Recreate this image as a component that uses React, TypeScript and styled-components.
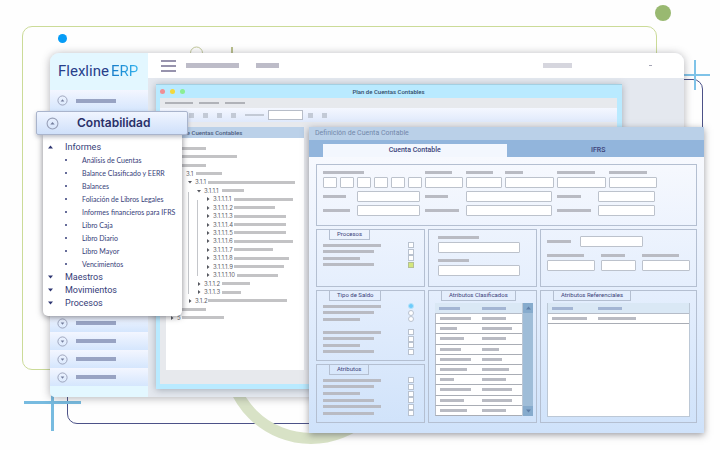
import React from "react";
import styled, { createGlobalStyle, css } from "styled-components";

const GlobalStyle = createGlobalStyle`
  *, *::before, *::after { box-sizing: border-box; }
  body {
    margin: 0;
    background: #fefefe;
    font-family: Roboto, "Liberation Sans", sans-serif;
    color: #3b4279;
  }
  button, input { font: inherit; color: inherit; padding: 0; margin: 0; border: 0; }
  h1, h2, h3, p, ul { margin: 0; padding: 0; font-weight: 400; }
  ul { list-style: none; }
`;

/* ---------- stage and backdrop ---------- */

const Stage = styled.main`
  position: relative;
  display: flow-root;
  min-height: 450px;
  overflow: hidden;
`;

const Outline = styled.div<{ $tone: "lime" | "navy" }>`
  position: absolute;
  border-radius: 10px;
  ${(p) =>
    p.$tone === "lime"
      ? css`inset: 26px 63px 80px 22px; border: 1px solid #cbdb98;`
      : css`inset: 79px 17px 26px 67px; border: 1px solid #4c5288;`}
`;

const Dot = styled.span<{ $tone: "green" | "blue" }>`
  position: absolute;
  border-radius: 50%;
  ${(p) =>
    p.$tone === "green"
      ? css`top: 5px; right: 49px; width: 16px; height: 16px; background: #99b971;`
      : css`top: 34px; left: 58px; width: 9px; height: 9px; background: #069cf6;`}
`;

const Doodle = styled.svg<{ $side?: "right" }>`
  position: absolute;
  top: 0;
  ${(p) => (p.$side === "right" ? "right: 0;" : "left: 0;")}
  fill: none;
`;

/* ---------- shared skeleton pieces ---------- */

const Bar = styled.span<{ $w: number; $h?: number; $c?: string }>`
  display: block;
  flex: none;
  width: ${(p) => p.$w}px;
  height: ${(p) => p.$h ?? 3}px;
  background: ${(p) => p.$c ?? "#b9bbc3"};
`;

/* ---------- main window ---------- */

const MainWindow = styled.section`
  position: relative;
  display: grid;
  grid-template-columns: 98px 1fr;
  margin: 53px 36px 53px 50px;
  border-radius: 9px 9px 5px 5px;
  overflow: hidden;
  background: #e4e8ef;
`;

const MainShadow = styled.div`
  position: absolute;
  inset: 53px 36px 53px 50px;
  border-radius: 9px 9px 5px 5px;
  box-shadow: 0 1px 8px rgba(60, 60, 70, 0.4);
`;

const Sidebar = styled.nav`
  display: flex;
  flex-direction: column;
  background: #e3f7ff;
  padding-bottom: 11px;
`;

const Logo = styled.h1`
  display: flex;
  align-items: center;
  gap: 2px;
  height: 37px;
  padding: 0 0 2px 8px;
  font-size: 15px;
  line-height: 18px;
  color: #27408b;
`;

const LogoAccent = styled.span`
  color: transparent;
  background: linear-gradient(90deg, #1378c6, #35b4ee);
  background-clip: text;
`;

const SideButton = styled.button<{ $tall?: boolean }>`
  display: flex;
  align-items: center;
  gap: 8px;
  height: ${(p) => (p.$tall ? 21 : 18)}px;
  padding-left: 7px;
  background: linear-gradient(#f3f6ff, #d5e6fd);
`;

const SideGap = styled.div`
  flex: 1;
`;

const TopBar = styled.header`
  display: flex;
  align-items: center;
  height: 25px;
  padding: 0 32px 0 13px;
  background: #fff;
`;

const MenuButton = styled.button`
  display: grid;
  gap: 3px;
  width: 15px;
  margin-right: 10px;
  background: none;
`;

const MenuLine = styled.span`
  height: 2px;
  background: #9793ad;
`;

const TopLinks = styled.div`
  display: flex;
  flex: 1;
  gap: 17px;
`;

const TopUser = styled.div`
  display: flex;
  align-items: center;
  gap: 77px;
`;

const Content = styled.div`
  display: flex;
  flex-direction: column;
`;

const Workspace = styled.div`
  flex: 1;
  padding: 6px 62px 8px 8px;
`;

/* ---------- chart of accounts window ---------- */

const PlanWindow = styled.section`
  padding: 0 5px 5px 4px;
  background: #b9eaff;
  border-top: 1px solid #a3cfe2;
  box-shadow: 0 1px 7px rgba(70, 80, 95, 0.4);
`;

const PlanHead = styled.header`
  display: grid;
  grid-template-columns: 30px 1fr 30px;
  align-items: center;
  height: 13px;
`;

const PlanTitle = styled.h2`
  font-size: 6px;
  line-height: 8px;
  font-weight: 500;
  text-align: center;
  color: #304a68;
`;

const Lights = styled.span`
  display: flex;
  gap: 5px;
`;

const Light = styled.i<{ $c: string }>`
  width: 5px;
  height: 5px;
  border-radius: 50%;
  background: ${(p) => p.$c};
`;

const PlanBody = styled.div`
  padding-bottom: 14px;
  background: #e7e9ed;
`;

const PlanMenu = styled.div`
  display: flex;
  align-items: center;
  gap: 6px;
  height: 10px;
  padding-left: 5px;
`;

const Toolbar = styled.div`
  display: flex;
  align-items: center;
  gap: 9px;
  height: 14px;
  margin-bottom: 5px;
  padding-left: 15px;
  background: linear-gradient(#f4f7ff, #dfe9fb);
`;

const Tool = styled.button`
  width: 5px;
  height: 5px;
  background: #c3cad6;
`;

const ToolField = styled.input`
  width: 35px;
  height: 10px;
  border: 1px solid #b7bdc8;
  background: #fff;
  margin: 0 -4px 0 -5px;
`;

const TreePanel = styled.div`
  width: 138px;
  height: 243px;
  margin-left: 6px;
  background: #fff;
`;

const TreeTitle = styled.h2`
  height: 11px;
  padding-left: 4px;
  background: #bbd1e9;
  font-size: 6px;
  line-height: 11px;
  font-weight: 500;
  color: #4a5a7c;
`;

const Tree = styled.ul`
  position: relative;
  display: grid;
  grid-auto-rows: 1fr;
  height: 178px;
  margin-top: 6px;
`;

const TreeRow = styled.li<{ $level: number }>`
  display: flex;
  align-items: center;
  padding-left: ${(p) => 4 + p.$level * 9}px;
  font-family: Inter, Roboto, sans-serif;
  font-size: 6px;
  line-height: 8px;
  color: #606269;
`;

const TreeMark = styled.svg`
  flex: none;
  width: 4px;
  height: 4px;
  margin-right: 3px;
`;

const TreeLabel = styled.span<{ $w: number }>`
  flex: none;
  width: ${(p) => p.$w}px;
  white-space: nowrap;
`;

const TreeGuides = styled.svg`
  position: absolute;
  top: 0;
  left: 0;
  width: 60px;
  height: 178px;
`;

type Node = { level: number; mark?: "open" | "closed"; label?: string; lw: number; w: number };

const nodes: Node[] = [
  { level: 0, lw: 4, w: 25 },
  { level: 0, lw: 4, w: 56 },
  { level: 0, lw: 4, w: 25 },
  { level: 1, label: "3.1", lw: 10, w: 26 },
  { level: 2, mark: "open", label: "3.1.1", lw: 13, w: 87 },
  { level: 3, mark: "open", label: "3.1.1.1", lw: 18, w: 22 },
  { level: 4, mark: "closed", label: "3.1.1.1.1", lw: 21, w: 59 },
  { level: 4, mark: "closed", label: "3.1.1.1.2", lw: 21, w: 41 },
  { level: 4, mark: "closed", label: "3.1.1.1.3", lw: 21, w: 52 },
  { level: 4, mark: "closed", label: "3.1.1.1.4", lw: 21, w: 52 },
  { level: 4, mark: "closed", label: "3.1.1.1.5", lw: 21, w: 52 },
  { level: 4, mark: "closed", label: "3.1.1.1.6", lw: 21, w: 59 },
  { level: 4, mark: "closed", label: "3.1.1.1.7", lw: 21, w: 39 },
  { level: 4, mark: "closed", label: "3.1.1.1.8", lw: 21, w: 55 },
  { level: 4, mark: "closed", label: "3.1.1.1.9", lw: 21, w: 50 },
  { level: 4, mark: "closed", label: "3.1.1.1.10", lw: 24, w: 41 },
  { level: 3, mark: "closed", label: "3.1.1.2", lw: 18, w: 28 },
  { level: 3, mark: "closed", label: "3.1.1.3", lw: 18, w: 19 },
  { level: 2, mark: "closed", label: "3.1.2", lw: 13, w: 79 },
  { level: 0, lw: 4, w: 25 },
  { level: 0, mark: "closed", label: "5", lw: 5, w: 42 },
];

/* ---------- accounting menu card ---------- */

const MenuCard = styled.nav`
  position: absolute;
  top: 111px;
  left: 36px;
  width: 152px;
`;

const CardHead = styled.button`
  position: relative;
  display: flex;
  align-items: center;
  gap: 18px;
  width: 100%;
  height: 24px;
  padding-left: 9px;
  border: 1px solid #a9b4cc;
  border-radius: 2px;
  background: linear-gradient(#f0f5ff, #cfe0fa);
  box-shadow: 0 2px 4px rgba(60, 65, 90, 0.35);
  font-family: Inter, Roboto, sans-serif;
  font-size: 12px;
  line-height: 16px;
  font-weight: 600;
  color: #2a3068;
`;

const CardBody = styled.ul`
  margin: 0 6px 0 7px;
  padding: 5px 0 7px;
  border-radius: 0 0 5px 5px;
  background: #fff;
  box-shadow: 0 1px 6px rgba(50, 50, 60, 0.6);
`;

const CardLink = styled.a<{ $sub?: boolean }>`
  display: flex;
  align-items: center;
  height: 13px;
  white-space: nowrap;
  text-decoration: none;
  color: #353c78;
  ${(p) =>
    p.$sub
      ? css`gap: 15px; padding-left: 22px; font-family: Lato, Roboto, sans-serif; font-size: 7px; line-height: 10px;`
      : css`gap: 12px; padding-left: 5px; font-size: 9px; line-height: 12px;`}
`;

const Bullet = styled.i`
  width: 2px;
  height: 2px;
  border-radius: 50%;
  background: #353c78;
`;

/* ---------- account definition window ---------- */

const FormWindow = styled.section`
  position: absolute;
  top: 127px;
  left: 309px;
  right: 16px;
  background: linear-gradient(#f7f9fe 30px, #e4eefd 55%, #cfe2fa);
  box-shadow: 0 2px 7px rgba(60, 60, 70, 0.5);
`;

const FormTitle = styled.h2`
  height: 13px;
  padding-left: 6px;
  background: #bad0e8;
  font-size: 7px;
  line-height: 13px;
  color: #7388aa;
`;

const Tabs = styled.div`
  display: flex;
  align-items: flex-end;
  height: 17px;
  padding: 0 14px;
  background: #92b5dc;
`;

const Tab = styled.button<{ $active?: boolean }>`
  flex: 1;
  height: 13px;
  font-size: 7px;
  line-height: 13px;
  font-weight: 500;
  background: ${(p) => (p.$active ? "#f3f7fe" : "transparent")};
`;

const FormBody = styled.div`
  display: grid;
  grid-template-columns: 109fr 109fr 157fr;
  grid-template-rows: 62px 58px 133px;
  gap: 3px;
  padding: 7px 7px 10px;
`;

const Panel = styled.section<{ $wide?: boolean; $pad?: string; $grow?: number }>`
  display: flex;
  flex-direction: column;
  min-width: 0;
  ${(p) => p.$wide && "grid-column: 1 / -1;"}
  ${(p) => p.$grow && `flex: ${p.$grow};`}
  padding: ${(p) => p.$pad ?? "0 6px 5px"};
  border: 1px solid #b4bfd1;
`;

const Stack = styled.div`
  display: flex;
  flex-direction: column;
  gap: 3px;
`;

const Legend = styled.h3`
  align-self: flex-start;
  height: 10px;
  margin: 0 0 2px 6px;
  padding: 0 7px;
  border: 1px solid #b4bfd1;
  border-top: 0;
  font-size: 6px;
  line-height: 8px;
  font-weight: 400;
  white-space: nowrap;
  color: #3b4279;
`;

const Field = styled.input`
  display: block;
  min-width: 0;
  width: 100%;
  height: 11px;
  border: 1px solid #bcc2cc;
  border-radius: 1px;
  background: #fff;
`;

const TopGrid = styled.div`
  display: grid;
  grid-template-columns: 99fr 38fr 37fr 49fr 49fr 48fr;
  gap: 3px;
`;

const GroupGrid = styled.div`
  display: grid;
  grid-template-columns: 99fr 130fr 100fr;
  gap: 3px;
  margin-top: 3px;
`;

const Stacked = styled.label`
  display: grid;
  gap: 3px;
  min-width: 0;
`;

const Boxes = styled.div`
  display: grid;
  grid-template-columns: repeat(6, 1fr);
  gap: 3px;
`;

const Inline = styled.label<{ $label: number }>`
  display: grid;
  grid-template-columns: ${(p) => p.$label}px 1fr;
  align-items: center;
  padding-right: 2px;
`;

const Options = styled.div`
  flex: 1;
  display: grid;
  grid-auto-rows: 1fr;
`;

const Option = styled.label`
  display: flex;
  align-items: center;
  justify-content: space-between;
  height: 6px;
  padding-right: 4px;
`;

const Choice = styled.input`
  appearance: none;
  flex: none;
  width: 6px;
  height: 6px;
  border: 1px solid #b9c2cf;
  background: #fff;
  &[type="radio"] { border-radius: 50%; }
  &[type="radio"]:checked { background: #6ccbfb; border-color: #b4e2fa; }
  &[type="checkbox"]:checked { background: #d3e67c; border-color: #b3bf94; }
`;

const CodeRow = styled.label`
  display: grid;
  grid-template-columns: 33px 63px;
  align-items: center;
  margin-bottom: 7px;
`;

const TripleGrid = styled.div`
  display: grid;
  grid-template-columns: 48fr 35fr 48fr;
  gap: 6px;
`;

const TableFrame = styled.div`
  display: flex;
  align-items: flex-start;
  margin-right: -3px;
`;

const Table = styled.table<{ $first: number; $tall?: boolean }>`
  flex: 1;
  width: 100%;
  table-layout: fixed;
  ${(p) => p.$tall && "height: 113px; border-right: 1px solid #bcc8d6;"}
  border-spacing: 0;
  font-size: 0;
  th, td { padding: 0 0 0 4px; }
  th:first-child { width: ${(p) => p.$first}px; }
  th { height: 11px; background: #dae8f5; border-bottom: 1px solid #b5bcc8; }
  td { height: 10px; background: #fff; border-bottom: 1px solid #a9adb5; }
  ${(p) => p.$tall && "td:first-child { border-left: 1px solid #b5bcc8; }"}
`;

const Scroller = styled.div`
  display: flex;
  flex-direction: column;
  justify-content: space-between;
  width: 10px;
  align-self: stretch;
  background: #9fbdd8;
`;

const ScrollButton = styled.button`
  display: grid;
  place-items: center;
  height: 10px;
  background: #86abcd;
`;

const RefFrame = styled.div`
  flex: 1;
  background: #fff;
  border: 1px solid #bcc8d6;
  border-top: 0;
`;

/* ---------- small drawings ---------- */

function Knob({ size, up }: { size: number; up?: boolean }) {
  return (
    <svg width={size} height={size} viewBox="0 0 12 12" fill="none">
      <circle cx="6" cy="6" r="5" stroke="#98a0b8" strokeWidth="1" />
      <path d={up ? "M4 7h4L6 4.6z" : "M4 5h4L6 7.4z"} fill="#737d9c" />
    </svg>
  );
}

function Caret({ up, tone = "#2f3672" }: { up?: boolean; tone?: string }) {
  return (
    <svg width="5" height="4" viewBox="0 0 5 4">
      <path d={up ? "M0 3.5h5L2.5 .5z" : "M0 .5h5L2.5 3.5z"} fill={tone} />
    </svg>
  );
}

const subItems = [
  "Análisis de Cuentas",
  "Balance Clasificado y EERR",
  "Balances",
  "Foliación de Libros Legales",
  "Informes financieros para IFRS",
  "Libro Caja",
  "Libro Diario",
  "Libro Mayor",
  "Vencimientos",
];

const classified = [
  [31, 24], [17, 30], [24, 24], [21, 17], [31, 20],
  [27, 27], [14, 24], [31, 30], [24, 30], [27, 24],
];

type Opt = { w: number; kind?: "radio" | "none"; on?: boolean };

function OptionList({ name, items }: { name: string; items: Opt[] }) {
  return (
    <Options>
      {items.map((o, i) =>
        o.kind === "none" ? (
          <span key={i} />
        ) : (
          <Option key={i}>
            <Bar $w={o.w} />
            <Choice
              type={o.kind ?? "checkbox"}
              name={name}
              defaultChecked={o.on}
              aria-label={`${name} ${i + 1}`}
            />
          </Option>
        )
      )}
    </Options>
  );
}

function StackedField({ w, name }: { w: number; name: string }) {
  return (
    <Stacked>
      <Bar $w={w} />
      <Field aria-label={name} />
    </Stacked>
  );
}

function InlineField({ w, label, name }: { w: number; label: number; name: string }) {
  return (
    <Inline $label={label}>
      <Bar $w={w} />
      <Field aria-label={name} />
    </Inline>
  );
}

export default function App() {
  return (
    <>
      <GlobalStyle />
      <Stage>
        <Outline $tone="lime" />
        <Outline $tone="navy" />
        <Dot $tone="green" />
        <Dot $tone="blue" />
        <Doodle width="420" height="450" aria-hidden>
          <circle cx="311" cy="356" r="82.5" stroke="#d8e2c6" strokeWidth="11" />
          <circle cx="196.5" cy="53" r="6" stroke="#c3c99c" />
          <path d="M232 47v8" stroke="#b9bf8c" strokeWidth="2" />
          <path d="M24 402.5h57M52.5 392v39" stroke="#77bbe0" strokeWidth="3" />
        </Doodle>
        <Doodle $side="right" width="40" height="100" aria-hidden>
          <path d="M0 75h30M15 60v30" stroke="#7fc3e8" strokeWidth="2" />
        </Doodle>

        <MainShadow />
        <MainWindow>
          <Sidebar>
            <Logo>
              Flexline <LogoAccent>ERP</LogoAccent>
            </Logo>
            <SideButton $tall aria-label="Módulo 1">
              <Knob size={11} up />
              <Bar $w={40} $h={4} $c="#98a3c3" />
            </SideButton>
            <SideGap />
            {[2, 3, 4, 5].map((n) => (
              <SideButton key={n} aria-label={`Módulo ${n}`}>
                <Knob size={11} />
                <Bar $w={40} $h={4} $c="#98a3c3" />
              </SideButton>
            ))}
          </Sidebar>
          <Content>
            <TopBar>
              <MenuButton aria-label="Menú">
                <MenuLine />
                <MenuLine />
                <MenuLine />
              </MenuButton>
              <TopLinks>
                <Bar $w={53} $h={5} $c="#bdbcc8" />
                <Bar $w={23} $h={5} $c="#bdbcc8" />
              </TopLinks>
              <TopUser>
                <Bar $w={29} $h={5} $c="#d6d6de" />
                <Bar $w={3} $h={1} $c="#a5a5b5" />
              </TopUser>
            </TopBar>
            <Workspace>
              <PlanWindow>
                <PlanHead>
                  <Lights>
                    <Light $c="#f08f95" />
                    <Light $c="#f4d83c" />
                    <Light $c="#8bee93" />
                  </Lights>
                  <PlanTitle>Plan de Cuentas Contables</PlanTitle>
                </PlanHead>
                <PlanBody>
                  <PlanMenu>
                    <Bar $w={28} $h={2} $c="#b0b2b8" />
                    <Bar $w={20} $h={2} $c="#b0b2b8" />
                    <Bar $w={20} $h={2} $c="#b0b2b8" />
                  </PlanMenu>
                  <Toolbar>
                    {["Nuevo", "Abrir", "Guardar", "Copiar", "Imprimir"].map((t) => (
                      <Tool key={t} aria-label={t} />
                    ))}
                    <Bar $w={19} $h={2} $c="#c3cad6" />
                    <ToolField aria-label="Buscar" />
                    <Tool aria-label="Anterior" />
                    <Tool aria-label="Siguiente" />
                  </Toolbar>
                  <TreePanel>
                    <TreeTitle>Plan de Cuentas Contables</TreeTitle>
                    <Tree>
                      <TreeGuides aria-hidden>
                        <path d="M22.5 48v102M31.5 56v76" stroke="#c4c6ca" fill="none" />
                      </TreeGuides>
                      {nodes.map((n, i) => (
                        <TreeRow key={i} $level={n.level}>
                          <TreeMark viewBox="0 0 4 4">
                            {n.mark && (
                              <path
                                d={n.mark === "open" ? "M0 1h4L2 3.5z" : "M1 0v4l2.5-2z"}
                                fill="#55575e"
                              />
                            )}
                          </TreeMark>
                          <TreeLabel $w={n.lw}>{n.label}</TreeLabel>
                          <Bar $w={n.w} $c="#c3c3c5" />
                        </TreeRow>
                      ))}
                    </Tree>
                  </TreePanel>
                </PlanBody>
              </PlanWindow>
            </Workspace>
          </Content>
        </MainWindow>

        <MenuCard>
          <CardHead>
            <Knob size={13} up />
            Contabilidad
          </CardHead>
          <CardBody>
            <li>
              <CardLink href="#informes">
                <Caret up />
                Informes
              </CardLink>
            </li>
            {subItems.map((s) => (
              <li key={s}>
                <CardLink $sub href="#informes">
                  <Bullet />
                  {s}
                </CardLink>
              </li>
            ))}
            {["Maestros", "Movimientos", "Procesos"].map((s) => (
              <li key={s}>
                <CardLink href={`#${s.toLowerCase()}`}>
                  <Caret />
                  {s}
                </CardLink>
              </li>
            ))}
          </CardBody>
        </MenuCard>

        <FormWindow>
          <FormTitle>Definición de Cuenta Contable</FormTitle>
          <Tabs role="tablist">
            <Tab $active role="tab" aria-selected>
              Cuenta Contable
            </Tab>
            <Tab role="tab" aria-selected={false}>
              IFRS
            </Tab>
          </Tabs>
          <FormBody>
            <Panel $wide $pad="6px 39px 0 6px">
              <TopGrid>
                <Stacked as="div">
                  <Bar $w={41} />
                  <Boxes>
                    {[1, 2, 3, 4, 5, 6].map((n) => (
                      <Field key={n} aria-label={`Dígito ${n}`} />
                    ))}
                  </Boxes>
                </Stacked>
                <StackedField w={27} name="Nivel" />
                <StackedField w={27} name="Grupo" />
                <StackedField w={18} name="Tipo" />
                <StackedField w={38} name="Descripción" />
                <StackedField w={38} name="Referencia" />
              </TopGrid>
              <GroupGrid>
                <InlineField w={23} label={34} name="Nombre" />
                <InlineField w={23} label={41} name="Moneda" />
                <InlineField w={24} label={41} name="Clase" />
                <InlineField w={27} label={34} name="Vigencia" />
                <InlineField w={34} label={41} name="Unidad" />
                <InlineField w={34} label={41} name="Estado" />
              </GroupGrid>
            </Panel>

            <Panel $pad="0 6px 18px">
              <Legend>Procesos</Legend>
              <OptionList
                name="Procesos"
                items={[{ w: 58 }, { w: 51 }, { w: 37 }, { w: 51, on: true }]}
              />
            </Panel>
            <Panel $pad="6px 16px 0 9px">
              <Stack>
                <StackedField w={41} name="Código" />
                <span />
                <StackedField w={31} name="Código alterno" />
              </Stack>
            </Panel>
            <Panel $pad="6px 6px 0">
              <CodeRow>
                <Bar $w={24} />
                <Field aria-label="Centro" />
              </CodeRow>
              <TripleGrid>
                <StackedField w={37} name="Desde" />
                <StackedField w={24} name="Hasta" />
                <StackedField w={37} name="Total" />
              </TripleGrid>
            </Panel>

            <Stack>
              <Panel $grow={72}>
                <Legend>Tipo de Saldo</Legend>
                <OptionList
                  name="Tipo de Saldo"
                  items={[
                    { w: 58, kind: "radio", on: true },
                    { w: 51, kind: "radio" },
                    { w: 37, kind: "radio" },
                    { w: 0, kind: "none" },
                    { w: 58 },
                    { w: 51 },
                    { w: 37 },
                    { w: 51 },
                  ]}
                />
              </Panel>
              <Panel $grow={58}>
                <Legend>Atributos</Legend>
                <OptionList
                  name="Atributos"
                  items={[{ w: 58 }, { w: 51 }, { w: 37 }, { w: 51 }, { w: 58 }, { w: 51 }]}
                />
              </Panel>
            </Stack>
            <Panel>
              <Legend>Atributos Clasificados</Legend>
              <TableFrame>
                <Table $first={43} $tall>
                  <thead>
                    <tr>
                      <th><Bar $w={21} $c="#a3b5d3" /></th>
                      <th><Bar $w={24} $c="#a3b5d3" /></th>
                    </tr>
                  </thead>
                  <tbody>
                    {classified.map(([a, b], i) => (
                      <tr key={i}>
                        <td><Bar $w={a} /></td>
                        <td><Bar $w={b} /></td>
                      </tr>
                    ))}
                  </tbody>
                </Table>
                <Scroller>
                  <ScrollButton aria-label="Subir"><Caret up tone="#5f7fa8" /></ScrollButton>
                  <ScrollButton aria-label="Bajar"><Caret tone="#5f7fa8" /></ScrollButton>
                </Scroller>
              </TableFrame>
            </Panel>
            <Panel>
              <Legend>Atributos Referenciales</Legend>
              <RefFrame>
                <Table $first={46}>
                  <thead>
                    <tr>
                      <th><Bar $w={21} $c="#a3b5d3" /></th>
                      <th><Bar $w={24} $c="#a3b5d3" /></th>
                    </tr>
                  </thead>
                  <tbody>
                    <tr>
                      <td><Bar $w={35} /></td>
                      <td><Bar $w={38} /></td>
                    </tr>
                  </tbody>
                </Table>
              </RefFrame>
            </Panel>
          </FormBody>
        </FormWindow>
      </Stage>
    </>
  );
}
